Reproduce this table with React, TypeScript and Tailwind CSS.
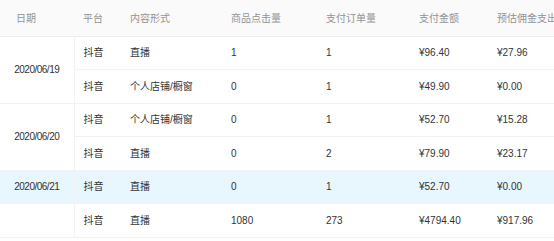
type Row = {
  date?: string;
  span?: number;
  platform: string;
  kind: string;
  clicks: string;
  orders: string;
  amount: string;
  commission: string;
  active?: boolean;
};

const rows: Row[] = [
  { date: "2020/06/19", span: 2, platform: "抖音", kind: "直播", clicks: "1", orders: "1", amount: "¥96.40", commission: "¥27.96" },
  { platform: "抖音", kind: "个人店铺/橱窗", clicks: "0", orders: "1", amount: "¥49.90", commission: "¥0.00" },
  { date: "2020/06/20", span: 2, platform: "抖音", kind: "个人店铺/橱窗", clicks: "0", orders: "1", amount: "¥52.70", commission: "¥15.28" },
  { platform: "抖音", kind: "直播", clicks: "0", orders: "2", amount: "¥79.90", commission: "¥23.17" },
  { date: "2020/06/21", span: 1, platform: "抖音", kind: "直播", clicks: "0", orders: "1", amount: "¥52.70", commission: "¥0.00", active: true },
  { date: "", span: 1, platform: "抖音", kind: "直播", clicks: "1080", orders: "273", amount: "¥4794.40", commission: "¥917.96" },
];

const headers = ["平台", "内容形式", "商品点击量", "支付订单量", "支付金额", "预估佣金支出"];

export default function App() {
  return (
    <div className="h-[241px] w-[554px] overflow-hidden bg-white font-['Liberation_Sans','Noto_Sans_CJK_SC',sans-serif] text-[10px]">
      <table className="w-[600px] table-fixed border-collapse">
        <colgroup>
          <col className="w-[74px]" />
          <col className="w-[47px]" />
          <col className="w-[101px]" />
          <col className="w-[95px]" />
          <col className="w-[93px]" />
          <col className="w-[78px]" />
          <col className="w-[112px]" />
        </colgroup>
        <thead>
          <tr className="h-[36px] border-b border-[#ececec] bg-[#fafafa] text-left text-[#939393]">
            <th className="pt-px pl-4 font-normal">日期</th>
            {headers.map((h) => (
              <th key={h} className="whitespace-nowrap pt-px pl-[9px] font-normal">{h}</th>
            ))}
          </tr>
        </thead>
        <tbody className="text-[#333]">
          {rows.map((r, i) => (
            <tr key={i} className={`h-[33.5px] border-b border-[#f2f2f2] ${r.active ? "bg-[#e8f6fe]" : ""}`}>
              {r.date !== undefined && (
                <td rowSpan={r.span} className="border-r border-[#f2f2f2] text-center tracking-[-0.5px]">{r.date}</td>
              )}
              <td className="pl-[9px]">{r.platform}</td>
              <td className="pl-[9px]">{r.kind}</td>
              <td className="pl-[9px]">{r.clicks}</td>
              <td className="pl-[9px]">{r.orders}</td>
              <td className="pl-[9px]">{r.amount}</td>
              <td className="pl-[9px]">{r.commission}</td>
            </tr>
          ))}
        </tbody>
      </table>
    </div>
  );
}
